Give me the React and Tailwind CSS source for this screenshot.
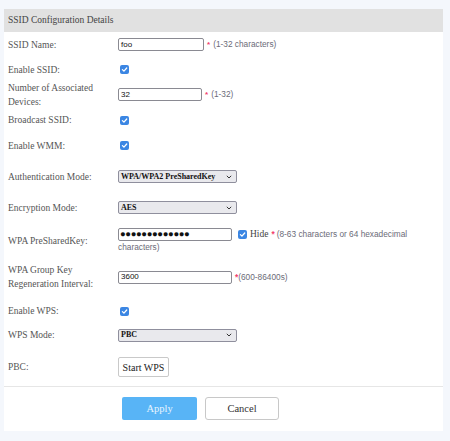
import React from 'react';

const serif = { fontFamily: '"Liberation Serif", "Times New Roman", serif' };
const sans = { fontFamily: '"Liberation Sans", Arial, sans-serif' };

function Check({ className = '' }) {
  return (
    <span className={`inline-flex w-[9px] h-[9px] rounded-[2px] bg-[#3b86e3] items-center justify-center shrink-0 ${className}`}>
      <svg width="7" height="7" viewBox="0 0 10 10">
        <path d="M2 5.2 L4.2 7.3 L8.2 2.8" fill="none" stroke="#fff" strokeWidth="1.8" strokeLinecap="round" strokeLinejoin="round" />
      </svg>
    </span>
  );
}

function TextBox({ value, w }) {
  return (
    <div className={`h-[13px] ${w} border border-[#8a8a92] rounded-[2px] bg-white flex items-center px-[2px] text-[8px] text-[#111] shrink-0`} style={sans}>
      {value}
    </div>
  );
}

function Select({ value }) {
  return (
    <div className="h-[13px] w-[119px] border border-[#8f8f9d] rounded-[2px] bg-[#e9e9ed] flex items-center justify-between pl-[2px] pr-[4px] text-[8px] font-bold text-[#111]" style={serif}>
      <span>{value}</span>
      <svg width="6" height="4" viewBox="0 0 6 4">
        <path d="M0.8 0.8 L3 3 L5.2 0.8" fill="none" stroke="#333" strokeWidth="1" />
      </svg>
    </div>
  );
}

function Star() {
  return <span className="text-[#f2416c] font-bold">*</span>;
}

function Hint({ children }) {
  return <span className="text-[8.3px] text-[#6b6b78] ml-[3px]" style={sans}>{children}</span>;
}

function Row({ label, h, className = '', children }) {
  return (
    <div className={`flex items-center ${h} ${className}`}>
      <div className="w-[114px] pl-[4px] pr-[4px] text-[9.5px] leading-[14px] text-[#555]" style={serif}>{label}</div>
      <div className="flex-1 flex items-center">{children}</div>
    </div>
  );
}

export default function App() {
  return (
    <div className="w-[450px] h-[441px] bg-[#f4f7fc] pt-[9px] pl-[4px] overflow-hidden">
      <div className="w-[439px] bg-white">
        <div className="h-[23px] bg-[#e1e1e1] pl-[4px] flex items-center text-[9.5px] text-[#444]" style={serif}>
          SSID Configuration Details
        </div>

        <Row label="SSID Name:" h="h-[25px]">
          <TextBox value="foo" w="w-[86px]" />
          <span className="ml-[3px] text-[8px]" style={sans}><Star /></span>
          <Hint>(1-32 characters)</Hint>
        </Row>
        <Row label="Enable SSID:" h="h-[25px]">
          <Check className="ml-[2px]" />
        </Row>
        <Row label="Number of Associated Devices:" h="h-[25px]">
          <TextBox value="32" w="w-[84px]" />
          <span className="ml-[3px] text-[8px]" style={sans}><Star /></span>
          <Hint>(1-32)</Hint>
        </Row>
        <Row label="Broadcast SSID:" h="h-[26px]">
          <Check className="ml-[2px]" />
        </Row>
        <Row label="Enable WMM:" h="h-[25px]">
          <Check className="ml-[2px]" />
        </Row>
        <Row label="Authentication Mode:" h="h-[37px]">
          <Select value="WPA/WPA2 PreSharedKey" />
        </Row>
        <Row label="Encryption Mode:" h="h-[25px]">
          <Select value="AES" />
        </Row>
        <Row label="WPA PreSharedKey:" h="h-[42px]">
          <div className="flex flex-col text-[8.3px] text-[#6b6b78]" style={sans}>
            <div className="flex items-center h-[13px]">
              <div className="h-[13px] w-[114px] border border-[#8a8a92] rounded-[2px] bg-white flex items-center pl-[1px] text-[9.5px] tracking-[-0.4px] text-[#111] shrink-0 overflow-hidden">
                ●●●●●●●●●●●●●
              </div>
              <Check className="ml-[6px] mr-[3px]" />
              <span className="text-[9.5px] text-[#444]" style={serif}>Hide</span>
              <span className="ml-[3px]"><Star /></span>
              <span className="ml-[2px] whitespace-nowrap">(8-63 characters or 64 hexadecimal</span>
            </div>
            <div className="h-[13px] flex items-center">characters)</div>
          </div>
        </Row>
        <Row label="WPA Group Key Regeneration Interval:" h="h-[30px]">
          <TextBox value="3600" w="w-[114px]" />
          <span className="ml-[3px] text-[8.3px] text-[#6b6b78]" style={sans}><Star />(600-86400s)</span>
        </Row>
        <Row label="Enable WPS:" h="h-[24px]" className="mt-[7px]">
          <Check className="ml-[2px]" />
        </Row>
        <Row label="WPS Mode:" h="h-[24px]">
          <Select value="PBC" />
        </Row>
        <Row label="PBC:" h="h-[32px]" className="mt-[4px]">
          <button className="h-[20px] w-[51px] border border-[#c9c9c9] rounded-[2px] bg-white text-[10px] text-[#222]" style={serif}>
            Start WPS
          </button>
        </Row>

        <div className="mt-[3px] border-t border-[#e6e6e6] pt-[10px] pb-[11px] pl-[118px] flex gap-[8px]">
          <button className="h-[23px] w-[75px] rounded-[2px] bg-[#58b4f6] text-[10.5px] text-[#e8f4fe]" style={serif}>
            Apply
          </button>
          <button className="h-[23px] w-[74px] rounded-[3px] border border-[#c8c8c8] bg-white text-[10.5px] text-[#333]" style={serif}>
            Cancel
          </button>
        </div>
      </div>
    </div>
  );
}
